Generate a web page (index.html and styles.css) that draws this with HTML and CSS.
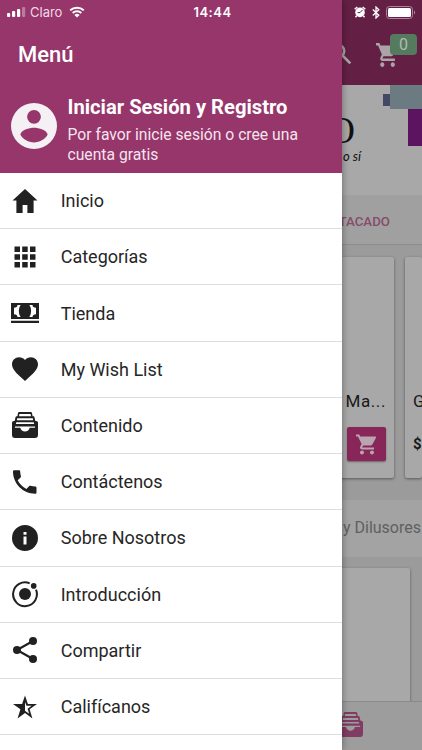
FILE: index.html
```html
<!DOCTYPE html>
<html lang="es">
<head>
    <meta charset="UTF-8">
    <meta name="viewport" content="width=device-width, initial-scale=1.0">
    <title>Menú</title>
    <link rel="stylesheet" href="styles.css">
</head>
<body>

    <svg class="sprite" width="0" height="0">
        <symbol id="cart" viewBox="0 0 24 24">
            <path d="M7 18c-1.1 0-1.99.9-1.99 2S5.900 22 7 22s2-.9 2-2-.9-2-2-2zM1 2v2h2l3.600 7.590-1.350 2.450c-.16.28-.25.610-.25.960 0 1.100.9 2 2 2h12v-2H7.420c-.14 0-.25-.11-.25-.25l.03-.12.900-1.630h7.450c.75 0 1.410-.41 1.750-1.030l3.580-6.490A1 1 0 0 0 20 4H5.210l-.94-2H1zm16 16c-1.100 0-1.990.9-1.990 2s.89 2 1.990 2 2-.9 2-2-.9-2-2-2z"/>
        </symbol>
        <symbol id="filing" viewBox="0 0 26 26">
            <path fill-rule="evenodd" d="M7.200 0h11.600a1.200 1.200 0 0 1 1.200 1l.6 3.200h.7c.6 0 1.100.4 1.200 1l.7 3.600 1.800.5c.6.200 1 .8 1 1.500V23a3 3 0 0 1-3 3H3a3 3 0 0 1-3-3V10.800c0-.7.400-1.300 1-1.500l1.800-.5.700-3.600c.1-.6.600-1 1.200-1h.7L6 1c.1-.6.600-1 1.200-1zM7.400 2l-.4 2.200h12L18.600 2zM5.200 6.300l-.3 1.900h16.200l-.3-1.900zM4.300 10.300l-.4 1.700h18.200l-.4-1.700zM3 14.400v1.300h5.300c.4 2.200 2.300 3.800 4.700 3.800s4.300-1.600 4.700-3.800H23v-1.300z"/>
        </symbol>
    </svg>

    <div class="screen">

        <div class="statusbar">
            <div class="carrier">
                <svg width="19" height="11" viewBox="0 0 19 11">
                    <rect x="0" y="6" width="3.200" height="4" rx="1"/>
                    <rect x="5" y="4" width="3.200" height="6" rx="1"/>
                    <rect x="10" y="2" width="3.200" height="8" rx="1"/>
                    <rect x="15" y="0" width="3.200" height="10" rx="1" opacity=".35"/>
                </svg>
                <span>Claro</span>
                <svg class="wifi" width="16" height="12" viewBox="0 0 16 12">
                    <path d="M1.200 4.300a10 10 0 0 1 13.600 0M3.700 6.900a6.300 6.300 0 0 1 8.600 0" fill="none" stroke="#fff" stroke-width="2"/>
                    <path d="M8 11.500L5.400 8.900a3.800 3.800 0 0 1 5.200 0z"/>
                </svg>
            </div>
            <div class="clock">14:44</div>
            <div class="indicators">
                <svg width="12" height="12" viewBox="0 0 12 12">
                    <circle cx="6" cy="6.400" r="4.800"/>
                    <path d="M.7 3.300L3.300.9M11.300 3.300L8.700.9M2.700 9.800l-1.200 1.500M9.300 9.800l1.200 1.500" stroke="#fff" stroke-width="1.400"/>
                    <path d="M8.400 4L6 6.600H3.600" stroke="#632044" stroke-width="1" fill="none"/>
                </svg>
                <svg class="bluetooth" width="8" height="13" viewBox="0 0 8 13">
                    <path d="M.8 3.500l6 5.700L4 12V1l2.800 2.800-6 5.700" fill="none" stroke="#fff" stroke-width="1.300"/>
                </svg>
                <svg width="30" height="13" viewBox="0 0 30 13">
                    <rect x=".5" y=".5" width="26" height="12" rx="3" fill="none" stroke="#ab8299"/>
                    <rect x="2" y="2" width="23" height="9" rx="1.500"/>
                    <path d="M28 4.500c1.500.5 1.500 3.500 0 4z" fill="#ab8299"/>
                </svg>
            </div>
        </div>

        <div class="page">
            <div class="toolbar">
                <svg class="search" width="22" height="22" viewBox="0 0 22 22">
                    <circle cx="8" cy="8" r="6.200"/>
                    <path d="M12.500 12.500L20.300 20.300"/>
                </svg>
                <div class="cart">
                    <svg viewBox="1 2 20 20" preserveAspectRatio="none"><use href="#cart" width="24" height="24"/></svg>
                    <span class="badge">0</span>
                </div>
            </div>
            <div class="banner">
                <div class="logo">
                    <div class="logo-name">O</div>
                    <div class="logo-slogan">o sí</div>
                </div>
                <svg class="banner-art" width="40" height="62" viewBox="0 0 40 62">
                    <rect x="1" y="9" width="8" height="12" fill="#414965"/>
                    <rect x="8" y="0" width="32" height="24" fill="#6c7a81"/>
                    <rect x="26" y="24" width="14" height="37" fill="#5d1460"/>
                </svg>
            </div>
            <div class="tabs">DESTACADO</div>
            <div class="products">
                <div class="card">
                    <div class="name">Ma...</div>
                    <button class="buy">
                        <svg width="21" height="21" viewBox="1 2 21 20"><use href="#cart" width="24" height="24"/></svg>
                    </button>
                </div>
                <div class="card next">
                    <div class="name">G</div>
                    <div class="price">$</div>
                </div>
            </div>
            <div class="category">y Dilusores</div>
            <div class="products second">
                <div class="card"></div>
            </div>
            <div class="footer">
                <svg width="25" height="25"><use href="#filing"/></svg>
            </div>
        </div>

        <div class="drawer">
            <div class="title">Menú</div>
            <div class="account">
                <svg width="46" height="46" viewBox="0 0 46 46">
                    <path fill-rule="evenodd" d="M23 0a23 23 0 1 0 0 46 23 23 0 0 0 0-46zm0 6.900a6.900 6.900 0 1 1 0 13.800 6.900 6.900 0 0 1 0-13.800zm0 32.500c-5.600 0-10.800-3-13.600-7.600.1-4.500 9-7 13.600-7s13.500 2.500 13.600 7c-2.800 4.600-8 7.600-13.600 7.600z"/>
                </svg>
                <div>
                    <h2>Iniciar Sesión y Registro</h2>
                    <p>Por favor inicie sesión o cree una cuenta gratis</p>
                </div>
            </div>
            <div class="menu">
                <div class="item">
                    <svg viewBox="0 0 28 28"><path d="M14 2L1.500 13.600h3.900V26h6.200v-7.900h4.800V26h6.200V13.600h3.900z"/></svg>
                    <span>Inicio</span>
                </div>
                <div class="item">
                    <svg viewBox="0 0 28 28"><path d="M3.500 3.500h5.500v5.500H3.500zM11.200 3.500h5.500v5.500h-5.500zM19 3.500h5.500v5.500H19zM3.500 11.200h5.500v5.500H3.500zM11.200 11.200h5.500v5.500h-5.500zM19 11.200h5.500v5.500H19zM3.500 19h5.500v5.500H3.500zM11.200 19h5.500v5.500h-5.500zM19 19h5.500v5.500H19z"/></svg>
                    <span>Categorías</span>
                </div>
                <div class="item">
                    <svg viewBox="0 0 28 28">
                        <path d="M0 4h28v16H0zM0 21.800h28V24H0z"/>
                        <path fill="#fff" d="M6.500 6h3.200c-2.400 3.300-2.400 8.700 0 12H6.500c0-1.700-1.300-2.600-3.500-2.800V8.800c2.200-.2 3.500-1.100 3.500-2.800zM21.500 6h-3.200c2.400 3.300 2.400 8.700 0 12h3.200c0-1.700 1.300-2.600 3.500-2.800V8.800c-2.200-.2-3.500-1.100-3.500-2.800z"/>
                    </svg>
                    <span>Tienda</span>
                </div>
                <div class="item">
                    <svg viewBox="0 0 28 28"><path d="M14 26l-1.900-1.700C5.400 18.200 1 14.300 1 9.300 1 5.300 4.100 2.200 8.200 2.200c2.200 0 4.400 1 5.800 2.700 1.400-1.700 3.600-2.700 5.800-2.700 4.100 0 7.200 3.100 7.200 7.100 0 5-4.400 8.900-11.100 15z"/></svg>
                    <span>My Wish List</span>
                </div>
                <div class="item">
                    <svg viewBox="-1 -1 28 28"><use href="#filing" width="26" height="26"/></svg>
                    <span>Contenido</span>
                </div>
                <div class="item">
                    <svg viewBox="0 0 28 28"><path d="M6.700 12.300c1.900 3.700 5 6.700 8.700 8.700l2.900-2.900c.4-.4.900-.5 1.300-.3 1.400.5 3 .7 4.600.7.800 0 1.300.6 1.300 1.300v4.600c0 .7-.5 1.300-1.300 1.300C12 25.700 2 15.700 2 3.500c0-.8.600-1.300 1.300-1.300h4.600c.8 0 1.300.5 1.300 1.300 0 1.600.3 3.200.7 4.600.2.500.1 1-.3 1.300z"/></svg>
                    <span>Contáctenos</span>
                </div>
                <div class="item">
                    <svg viewBox="0 0 28 28"><path fill-rule="evenodd" d="M14 1a13 13 0 1 0 0 26 13 13 0 0 0 0-26zm-1.500 7h3v2.700h-3zm0 4.500h3v8h-3z"/></svg>
                    <span>Sobre Nosotros</span>
                </div>
                <div class="item">
                    <svg viewBox="0 0 28 28">
                        <circle cx="14" cy="14" r="6"/>
                        <circle cx="22.700" cy="5.900" r="2.800"/>
                        <path d="M18.700 3.300A11.900 11.900 0 1 0 25 9.700" fill="none" stroke="#212121" stroke-width="2"/>
                    </svg>
                    <span>Introducción</span>
                </div>
                <div class="item">
                    <svg viewBox="0 0 28 28">
                        <path d="M22 5L6 14l16 9" fill="none" stroke="#212121" stroke-width="2.200"/>
                        <circle cx="22" cy="5" r="4"/>
                        <circle cx="6" cy="14" r="4"/>
                        <circle cx="22" cy="23" r="4"/>
                    </svg>
                    <span>Compartir</span>
                </div>
                <div class="item">
                    <svg viewBox="0 0 28 28"><path fill-rule="evenodd" d="M14 2.500l2.900 8.400h9.100l-7.400 5.400 2.800 9.200-7.400-5.400-7.400 5.400 2.800-9.200L2 10.900h9.100zm0 6.600v8.700l4.100 3-1.500-5.100 4-2.900h-5.100z"/></svg>
                    <span>Califícanos</span>
                </div>
            </div>
        </div>

    </div>

</body>
</html>
```
FILE: styles.css
```css
body {
    margin: 0;
    font-family: Roboto, Arial, sans-serif;
}
.sprite {
    display: block;
}
.screen {
    position: relative;
    width: 422px;
    height: 750px;
    overflow: hidden;
}

/* status bar */
.statusbar {
    position: absolute;
    top: 0;
    left: 0;
    z-index: 3;
    box-sizing: border-box;
    width: 422px;
    height: 24px;
    padding: 0 6px 0 7px;
    display: grid;
    grid-template-columns: 1fr auto 1fr;
    align-items: center;
    color: #fff;
    font-family: Inter, sans-serif;
    font-size: 13px;
}
.statusbar svg {
    fill: #fff;
}
.carrier {
    display: flex;
    align-items: center;
    gap: 4px;
    color: #f3d7e6;
}
.carrier .wifi {
    margin-left: 3px;
}
.clock {
    margin-left: 2px;
    font-weight: 600;
    letter-spacing: 0.5px;
}
.indicators {
    display: flex;
    justify-content: flex-end;
    align-items: center;
    gap: 6px;
}

/* page behind the menu */
.page {
    height: 750px;
    display: flex;
    flex-direction: column;
    background-color: #9b9b9b;
}
.toolbar {
    box-sizing: border-box;
    height: 85px;
    padding: 43px 25px 0 0;
    display: flex;
    justify-content: flex-end;
    gap: 24px;
    background-color: #632044;
}
.search {
    fill: none;
    stroke: #aaa3a7;
    stroke-width: 2.6;
}
.cart {
    position: relative;
    fill: #aaa3a7;
}
.cart svg {
    display: block;
    width: 21px;
    height: 24px;
}
.badge {
    position: absolute;
    top: -9px;
    left: 14px;
    width: 27px;
    height: 21px;
    border-radius: 4px;
    background-color: #557b5f;
    color: #b1bab3;
    font-size: 16px;
    line-height: 22px;
    text-align: center;
}
.banner {
    height: 110px;
    display: flex;
    justify-content: flex-end;
    background-color: #a8a8a8;
}
.logo {
    padding: 28px 21px 0 0;
    text-align: right;
    color: #111;
}
.logo-name {
    font-family: "Liberation Serif", serif;
    font-size: 37px;
    line-height: 36px;
    padding-right: 6px;
}
.logo-slogan {
    font-family: Lato, sans-serif;
    font-style: italic;
    font-size: 13px;
    line-height: 14px;
}
.banner-art {
    display: block;
}
.tabs {
    box-sizing: border-box;
    height: 50px;
    padding-right: 32px;
    border-bottom: 1px solid #8d8d8d;
    background-color: #a0a0a0;
    color: #874b6b;
    font-size: 13.3px;
    font-weight: 500;
    line-height: 53px;
    text-align: right;
}
.products {
    height: 255px;
    display: flex;
    justify-content: flex-end;
    gap: 11px;
    padding-top: 12px;
    box-sizing: border-box;
}
.card {
    box-sizing: border-box;
    width: 164px;
    height: 221px;
    padding: 134px 8px 0 0;
    border-radius: 2px;
    background-color: #a8a8a8;
    box-shadow: 0 1px 3px rgba(0, 0, 0, 0.45);
    color: #191919;
    text-align: right;
}
.card.next {
    width: 17px;
    padding: 134px 0 0 8px;
    text-align: left;
}
.name {
    font-size: 17px;
    line-height: 20px;
    letter-spacing: 0.6px;
}
.buy {
    width: 39px;
    height: 34px;
    margin-top: 16px;
    padding: 3px 0 0;
    border: 0;
    border-radius: 2px;
    background-color: #892659;
    box-shadow: 0 1px 2px rgba(0, 0, 0, 0.4);
    fill: #b9a4b0;
}
.price {
    margin-top: 24px;
    font-size: 15px;
    font-weight: 700;
}
.category {
    height: 57px;
    background-color: #a3a3a3;
    color: #606060;
    font-size: 16px;
    line-height: 55px;
    text-align: right;
    padding-right: 1px;
}
.products.second {
    height: 144px;
    padding: 11px 12px 0 0;
    overflow: hidden;
}
.footer {
    box-sizing: border-box;
    height: 49px;
    border-top: 1px solid #8a8a8a;
    padding: 10px 59px 0 0;
    background-color: #9d9d9d;
    fill: #823c63;
    text-align: right;
}

/* menu */
.drawer {
    position: absolute;
    top: 0;
    left: 0;
    z-index: 2;
    width: 342px;
    height: 750px;
    background-color: #fff;
    box-shadow: 0 0 7px rgba(0, 0, 0, 0.4);
}
.title {
    box-sizing: border-box;
    height: 86px;
    padding: 40px 0 0 18px;
    background-color: #96366a;
    color: #fff;
    font-size: 22px;
    font-weight: 500;
    line-height: 30px;
}
.account {
    box-sizing: border-box;
    height: 87px;
    padding: 9px 20px 0 11px;
    display: flex;
    gap: 11px;
    background-color: #96366a;
    color: #fff;
}
.account svg {
    flex: none;
    margin-top: 8px;
    margin-left: -0.5px;
    fill: #f4f0f3;
}
.account h2 {
    margin: 0;
    font-size: 20.2px;
    font-weight: 700;
    line-height: 25px;
}
.account p {
    margin: 5px 0 0;
    color: #f5e4ee;
    font-size: 15.7px;
    line-height: 19.5px;
}
.item {
    box-sizing: border-box;
    height: 56.23px;
    padding-left: 10.7px;
    display: flex;
    align-items: center;
    gap: 22px;
    border-bottom: 1px solid #dedede;
    color: #262626;
    font-size: 18px;
}
.item svg {
    width: 28px;
    height: 28px;
    fill: #212121;
}
```
